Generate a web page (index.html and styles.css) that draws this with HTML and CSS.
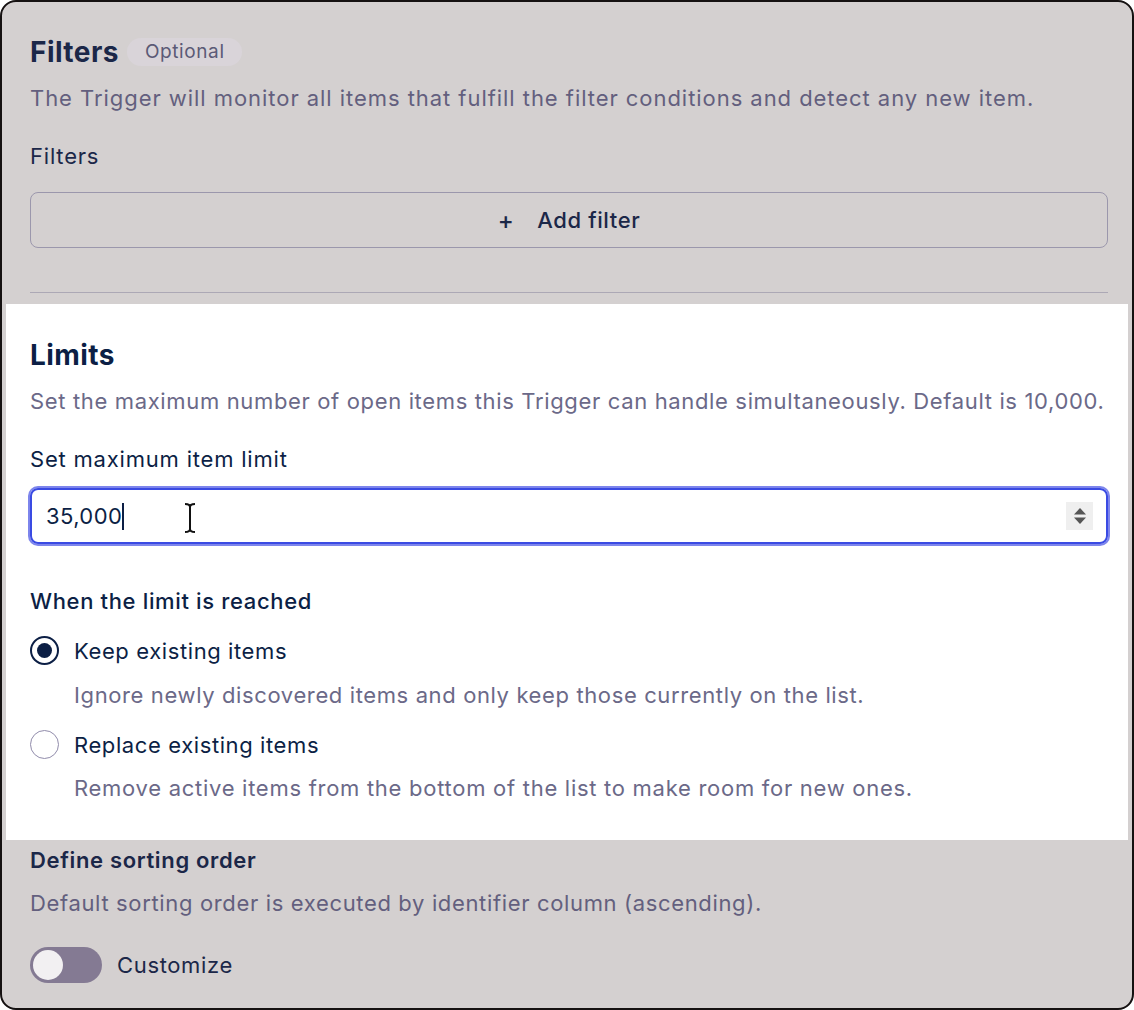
FILE: index.html
```html
<!DOCTYPE html>
<html lang="en">
<head>
<meta charset="utf-8">
<title>Trigger settings</title>
<link rel="stylesheet" href="styles.css">
</head>
<body>
<div class="frame">
  <section class="section filters">
    <div class="title-row">
      <h2 class="title">Filters</h2>
      <span class="badge">Optional</span>
    </div>
    <p class="desc desc-title wide">The Trigger will monitor all items that fulfill the filter conditions and detect any new item.</p>
    <div class="label label-gap plain">Filters</div>
    <button class="add-btn" type="button"><span class="plus">+</span><span>Add filter</span></button>
    <hr class="sep">
  </section>

  <section class="section limits">
    <h2 class="title">Limits</h2>
    <p class="desc desc-title">Set the maximum number of open items this Trigger can handle simultaneously. Default is 10,000.</p>
    <div class="label label-gap plain">Set maximum item limit</div>
    <div class="input">
      <span class="value">35,000</span><span class="caret"></span>
      <span class="spinner">
        <svg width="14" height="22" viewBox="0 0 14 22"><path d="M7 3 L13 9.5 H1 Z" fill="#555"/><path d="M7 19 L13 12.5 H1 Z" fill="#555"/></svg>
      </span>
      <svg class="ibeam" width="14" height="32" viewBox="0 0 14 32"><path d="M2 2 C5 2 7 3 7 5 C7 3 9 2 12 2 M7 5 V27 M2 30 C5 30 7 29 7 27 C7 29 9 30 12 30" fill="none" stroke="#111" stroke-width="2"/></svg>
    </div>
    <div class="label subhead">When the limit is reached</div>
    <div class="radio-row first">
      <span class="radio checked"><span class="dot"></span></span>
      <span class="radio-label">Keep existing items</span>
    </div>
    <p class="desc radio-desc d1">Ignore newly discovered items and only keep those currently on the list.</p>
    <div class="radio-row second">
      <span class="radio"></span>
      <span class="radio-label">Replace existing items</span>
    </div>
    <p class="desc radio-desc d2">Remove active items from the bottom of the list to make room for new ones.</p>
  </section>

  <section class="section sorting">
    <div class="label strong">Define sorting order</div>
    <p class="desc sort-desc">Default sorting order is executed by identifier column (ascending).</p>
    <div class="toggle-row">
      <span class="toggle"><span class="knob"></span></span>
      <span class="toggle-label">Customize</span>
    </div>
  </section>
</div>
</body>
</html>
```

FILE: styles.css
```css
* { box-sizing: border-box; }
html, body { margin: 0; padding: 0; background: #ffffff; }
body {
  font-family: Inter, "Noto Sans", "Liberation Sans", sans-serif;
  font-size: 22px; line-height: 28px; letter-spacing: 0.65px;
  color: #1b2748;
}

.frame {
  width: 1134px;
  height: 1010px;
  border: 2px solid #151111;
  border-radius: 16px;
  background: #d4d0d0;
  padding: 0 4px;
  overflow: hidden;
}

.section { padding: 0 20px 0 24px; }

.title { margin: 0; font-size: 28px; line-height: 36px; font-weight: 700; letter-spacing: 0.45px; }
.title-row { display: flex; align-items: center; gap: 8px; }
.filters { padding-top: 32px; padding-bottom: 11px; }
.filters .title { color: #1b2748; }

.badge {
  display: inline-flex; align-items: center;
  height: 28px; padding: 0 17px 0 18px; border-radius: 14px;
  background: #d9d4d9; color: #5b5a76; font-size: 19px; letter-spacing: 0.6px;
}

.desc { margin: 0; color: #635f7e; }
.desc.wide { letter-spacing: 0.95px; }
.desc-title { margin-top: 14px; }
.label { font-weight: 500; color: #1b2748; }
.label.plain { font-weight: 400; letter-spacing: 0.8px; }
.label-gap { margin-top: 30px; }

.add-btn {
  display: flex; align-items: center; justify-content: center; gap: 23px;
  width: 100%; height: 56px; margin-top: 22px;
  border: 1px solid #9b97ac; border-radius: 8px; background: transparent;
  font-family: inherit; font-size: 22px; font-weight: 500; letter-spacing: 0.6px; color: #1b2748;
  padding: 0;
}
.plus { font-size: 24px; font-weight: 500; }

.sep { margin: 44px 0 0; border: 0; border-top: 1px solid #aca8b5; height: 0; }

.limits { background: #ffffff; padding-top: 33px; padding-bottom: 38px; }
.limits .title { color: #0c1f45; }
.limits .desc { color: #6b6988; }
.limits .label { color: #0c1f45; }

.input {
  position: relative;
  display: flex; align-items: center;
  height: 56px; margin-top: 15px;
  border: 2px solid #3a4be3; border-radius: 8px;
  box-shadow: 0 0 0 2px #7d85ec;
  padding: 0 13px 0 14px;
  color: #0c1f45;
}
.value { font-size: 22px; letter-spacing: 0.4px; }
.caret { display: inline-block; width: 2px; height: 27px; background: #0c1f45; }
.spinner {
  margin-left: auto;
  width: 27px; height: 28px; background: #efefef;
  display: flex; align-items: center; justify-content: center;
}
.ibeam { position: absolute; left: 151px; top: 12px; }

.subhead { margin-top: 43px; }

.radio-row { display: flex; align-items: center; gap: 15px; color: #0c1f45; }
.radio-row.first { margin-top: 21px; }
.radio-row.second { margin-top: 21px; }
.radio {
  width: 29px; height: 29px; border-radius: 50%;
  border: 1.5px solid #918cab; background: #fff;
  display: flex; align-items: center; justify-content: center;
  flex: none;
}
.radio.checked { border: 2px solid #0c1f45; }
.dot { width: 15px; height: 15px; border-radius: 50%; background: #0c1f45; }
.radio-label { letter-spacing: 0.6px; }
.radio-desc { padding-left: 44px; letter-spacing: 0.62px; }
.radio-desc.d1 { margin-top: 16px; }
.radio-desc.d2 { margin-top: 15px; letter-spacing: 0.72px; }

.sorting { padding-top: 6px; }
.strong { font-weight: 600; }
.sort-desc { margin-top: 15px; }
.toggle-row { display: flex; align-items: center; gap: 15px; margin-top: 30px; }
.toggle {
  width: 72px; height: 36px; border-radius: 18px; background: #847a93;
  display: flex; align-items: center; padding-left: 3px;
}
.knob { width: 30px; height: 30px; border-radius: 50%; background: #f2f0f2; }
.toggle-label { color: #1b2748; }
```
